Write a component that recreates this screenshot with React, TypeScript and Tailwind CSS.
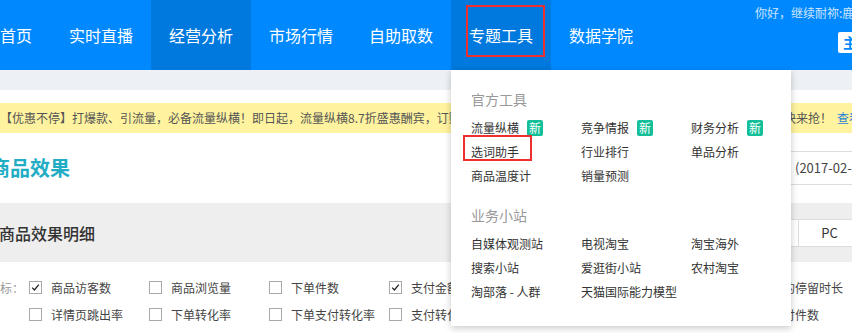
import React from "react";

const navItems = [
  { label: "实时直播", active: false },
  { label: "经营分析", active: true },
  { label: "市场行情", active: false },
  { label: "自助取数", active: false },
  { label: "专题工具", active: true },
  { label: "数据学院", active: false },
];

const row1 = [
  { label: "商品访客数", checked: true },
  { label: "商品浏览量", checked: false },
  { label: "下单件数", checked: false },
  { label: "支付金额", checked: true },
  { label: "下单金额", checked: false },
  { label: "下单买家数", checked: false },
  { label: "页的停留时长", checked: false },
];
const row2 = [
  { label: "详情页跳出率", checked: false },
  { label: "下单转化率", checked: false },
  { label: "下单支付转化率", checked: false },
  { label: "支付转化率", checked: false },
  { label: "支付买家数", checked: false },
  { label: "加购件数", checked: false },
  { label: "支付件数", checked: false },
];
const row3 = [
  { label: "访客平均价值", checked: false },
  { label: "收藏人数", checked: false },
  { label: "加购人数", checked: false },
  { label: "客单价", checked: false },
  { label: "售中退款", checked: false },
  { label: "搜索引导支付", checked: false },
  { label: "搜索访客数", checked: false },
];

const official = [
  { label: "流量纵横", isNew: true },
  { label: "竞争情报", isNew: true },
  { label: "财务分析", isNew: true },
  { label: "选词助手", isNew: false },
  { label: "行业排行", isNew: false },
  { label: "单品分析", isNew: false },
  { label: "商品温度计", isNew: false },
  { label: "销量预测", isNew: false },
];

const stations = [
  "自媒体观测站",
  "电视淘宝",
  "淘宝海外",
  "搜索小站",
  "爱逛街小站",
  "农村淘宝",
  "淘部落 - 人群",
  "天猫国际能力模型",
];

function Checkbox({ checked }: { checked: boolean }) {
  return (
    <div className="mr-[9px] flex h-[13px] w-[13px] shrink-0 items-center justify-center border border-[#a9a9a9] bg-white">
      {checked && (
        <svg width="11" height="11" viewBox="0 0 11 11">
          <path d="M2.2 5.6 L4.4 8 L8.8 2.6" fill="none" stroke="#222" strokeWidth="1.3" />
        </svg>
      )}
    </div>
  );
}

function CheckRow({ items, lead }: { items: { label: string; checked: boolean }[]; lead?: string }) {
  return (
    <div className="flex h-[27px] items-center">
      <div className="flex w-[29px] shrink-0 justify-end pr-[5px] text-[12px] whitespace-nowrap text-[#999]">
        {lead ?? ""}
      </div>
      {items.map((it, i) => (
        <div key={i} className="flex w-[120px] shrink-0 items-center">
          <Checkbox checked={it.checked} />
          <span className="text-[12px] whitespace-nowrap text-[#444]">{it.label}</span>
        </div>
      ))}
    </div>
  );
}

export default function App() {
  return (
    <div className="relative h-[333px] w-[852px] overflow-hidden bg-white font-['Noto_Sans_CJK_SC','Noto_Sans',sans-serif]">
      {/* Nav */}
      <div className="flex h-[70px] bg-[#0089ff] text-white">
        <div className="flex w-[51px] shrink-0 items-center text-[16px]">首页</div>
        {navItems.map((n) => (
          <div
            key={n.label}
            className={
              n.active
                ? "flex w-[100px] shrink-0 items-center justify-center bg-[#0079de] text-[16px]"
                : "flex w-[100px] shrink-0 items-center justify-center text-[16px]"
            }
          >
            {n.label}
          </div>
        ))}
        <div className="flex min-w-0 flex-1 flex-col overflow-hidden pt-[5px] pl-[104px]">
          <div className="text-[12px] leading-[16px] whitespace-nowrap text-[#cde4ff]">
            你好，继续耐祢:鹿鹿的小店
          </div>
          <div className="mt-[11px] ml-[83px] flex h-[21px] w-[60px] shrink-0 items-center rounded-[2px] bg-white px-[5px] text-[14px] font-bold whitespace-nowrap text-[#0089ff]">
            主账号
          </div>
        </div>
      </div>
      <div className="h-[20px] bg-[#edf0f4]" />
      <div className="h-[13px]" />
      {/* Banner */}
      <div className="flex h-[30px] items-center bg-[#fff39f] text-[12px] whitespace-nowrap text-[#555]">
        <div className="w-[784px] shrink-0 overflow-hidden">
          【优惠不停】打爆款、引流量，必备流量纵横！即日起，流量纵横8.7折盛惠酬宾，订购即享超值好礼，名额有限，先到先得，
        </div>
        <span>快来抢！</span>
        <span className="ml-[5px] text-[#1e7fd8]">查看详情</span>
      </div>
      {/* Title row */}
      <div className="flex h-[70px] items-center">
        <div className="-ml-[10px] w-[790px] shrink-0 text-[20px] font-bold text-[#23adc5]">
          商品效果
        </div>
        <div className="flex h-[34px] flex-1 items-center border-y border-[#dddddd] pl-[15px] text-[13px] whitespace-nowrap text-[#444]">
          (2017-02-14 ~ 2017-02-20)
        </div>
      </div>
      {/* Band */}
      <div className="flex h-[59px] items-center bg-[#eeeeee]">
        <div className="-ml-[1px] w-[737px] shrink-0 text-[16px] font-medium text-[#333]">
          商品效果明细
        </div>
        <div className="flex h-[28px] shrink-0 border border-[#dddddd] bg-white text-[13px] text-[#333]">
          <div className="flex w-[62px] items-center justify-center border-r border-[#dddddd]">全部</div>
          <div className="flex w-[62px] items-center justify-center border-r border-[#dddddd]">PC</div>
          <div className="flex w-[62px] items-center justify-center">无线</div>
        </div>
      </div>
      {/* Checkboxes */}
      <div className="pt-[12px]">
        <CheckRow items={row1} lead="指标：" />
        <CheckRow items={row2} />
        <CheckRow items={row3} />
      </div>

      {/* Dropdown */}
      <div className="absolute top-[70px] left-[451px] h-[256px] w-[340px] bg-white px-[20px] pt-[20px] shadow-[0_2px_7px_rgba(0,0,0,0.22)]">
        <div className="text-[14px] leading-[18px] text-[#999]">官方工具</div>
        <div className="mt-[8px] grid grid-cols-[110px_110px_110px]">
          {official.map((o) => (
            <div key={o.label} className="flex h-[24px] items-center text-[12px] text-[#333]">
              <span>{o.label}</span>
              {o.isNew && (
                <span className="ml-[8px] flex h-[16px] w-[16px] items-center justify-center rounded-[2px] bg-[#13bf98] text-[12px] leading-none text-white">
                  新
                </span>
              )}
            </div>
          ))}
        </div>
        <div className="mt-[18px] text-[14px] leading-[18px] text-[#999]">业务小站</div>
        <div className="mt-[8px] grid grid-cols-[110px_110px_110px]">
          {stations.map((s) => (
            <div key={s} className="flex h-[24px] items-center text-[12px] text-[#333]">
              {s}
            </div>
          ))}
        </div>
      </div>

      {/* Annotation boxes */}
      <div className="absolute top-[5px] left-[466px] h-[52px] w-[79px] border-2 border-[#ee2f2f]" />
      <div className="absolute top-[135px] left-[463px] h-[26px] w-[69px] border-2 border-[#ee2f2f]" />
    </div>
  );
}
